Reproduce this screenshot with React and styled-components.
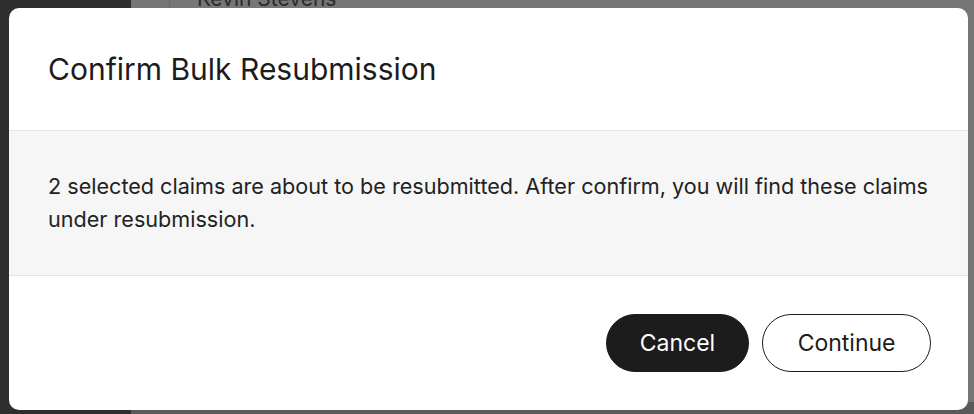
import React from 'react'
import styled, { createGlobalStyle } from 'styled-components'

const GlobalStyle = createGlobalStyle`
  html, body {
    margin: 0;
    padding: 0;
    width: 974px;
    height: 414px;
    overflow: hidden;
  }
  body {
    font-family: Inter, "Noto Sans", sans-serif;
    -webkit-font-smoothing: antialiased;
  }
`

const Page = styled.div`
  position: relative;
  display: flex;
  width: 974px;
  height: 414px;
  overflow: hidden;
`

const Sidebar = styled.div`
  width: 131px;
  background: #2e2e2e;
`

const Main = styled.div`
  flex: 1;
  display: flex;
  flex-direction: column;
  background: #767676;
`

const TableRow = styled.div`
  flex: 1;
  display: flex;
`

const BottomBar = styled.div`
  height: 12px;
  background: #5a5a5a;
`

const Gutter = styled.div`
  width: 38px;
  border-right: 1px solid #6a6a6a;
`

const CellText = styled.div`
  margin-top: -13px;
  margin-left: 27px;
  font-size: 21px;
  line-height: 24px;
  color: #2a2a2a;
`

const Modal = styled.div`
  position: absolute;
  top: 8px;
  left: 9px;
  width: 959px;
  height: 402px;
  background: #fff;
  border-radius: 10px;
  display: flex;
  flex-direction: column;
  overflow: hidden;
`

const Header = styled.div`
  height: 123px;
  display: flex;
  align-items: center;
  padding: 0 39px;
  border-bottom: 1px solid #e4e4e4;
  box-sizing: border-box;
`

const Title = styled.h2`
  margin: 0;
  font-size: 30px;
  font-weight: 400;
  color: #1c1c1c;
`

const Body = styled.div`
  height: 145px;
  background: #f6f6f6;
  border-bottom: 1px solid #e4e4e4;
  box-sizing: border-box;
  display: flex;
  align-items: center;
  padding: 0 39px;
`

const Message = styled.p`
  margin: 0;
  font-size: 21.6px;
  line-height: 33px;
  color: #222;
`

const Footer = styled.div`
  flex: 1;
  display: flex;
  align-items: center;
  justify-content: flex-end;
  gap: 13px;
  padding: 0 37px 0 0;
`

const Button = styled.button`
  height: 58px;
  padding: 0 ${({ $pad }) => $pad}px;
  border-radius: 29px;
  font-family: Inter, "Noto Sans", sans-serif;
  font-size: 23px;
  cursor: pointer;
  background: ${({ $primary }) => ($primary ? '#1b1c1b' : '#fff')};
  color: ${({ $primary }) => ($primary ? '#fff' : '#1b1c1b')};
  border: 1px solid #1b1c1b;
`

const App = () => {
  return (
    <>
      <GlobalStyle />
      <Page>
        <Sidebar />
        <Main>
          <TableRow>
            <Gutter />
            <CellText>Kevin Stevens</CellText>
          </TableRow>
          <BottomBar />
        </Main>
        <Modal>
          <Header>
            <Title>Confirm Bulk Resubmission</Title>
          </Header>
          <Body>
            <Message>
              2 selected claims are about to be resubmitted. After confirm, you will find these claims under resubmission.
            </Message>
          </Body>
          <Footer>
            <Button $primary $pad={33}>Cancel</Button>
            <Button $pad={34.5}>Continue</Button>
          </Footer>
        </Modal>
      </Page>
    </>
  )
}

export default App
